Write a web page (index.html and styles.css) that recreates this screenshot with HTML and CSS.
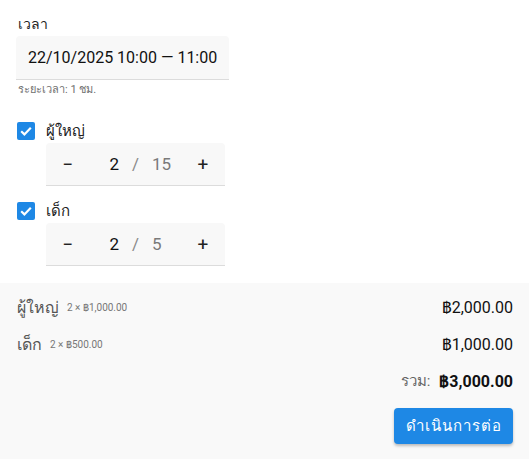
FILE: index.html
```html
<!DOCTYPE html>
<html lang="th">
<head>
<meta charset="utf-8">
<link rel="stylesheet" href="styles.css">
</head>
<body>
<div class="form">
  <div class="label">เวลา</div>
  <div class="field">22/10/2025 10:00 — 11:00</div>
  <div class="hint">ระยะเวลา: 1 ชม.</div>

  <div class="check-row">
    <span class="checkbox"><svg viewBox="0 0 18 18" width="18" height="18"><path d="M4.2 9.3l3.2 3.1 6.4-6.6" fill="none" stroke="#fff" stroke-width="2.2"/></svg></span>
    <span class="check-label">ผู้ใหญ่</span>
  </div>
  <div class="stepper">
    <span class="step-btn">−</span>
    <span class="value">2</span>
    <span class="slash">/</span>
    <span class="max">15</span>
    <span class="step-btn">+</span>
  </div>

  <div class="check-row">
    <span class="checkbox"><svg viewBox="0 0 18 18" width="18" height="18"><path d="M4.2 9.3l3.2 3.1 6.4-6.6" fill="none" stroke="#fff" stroke-width="2.2"/></svg></span>
    <span class="check-label">เด็ก</span>
  </div>
  <div class="stepper">
    <span class="step-btn">−</span>
    <span class="value">2</span>
    <span class="slash">/</span>
    <span class="max">5</span>
    <span class="step-btn">+</span>
  </div>
</div>

<div class="summary">
  <div class="line">
    <div class="item"><span class="item-name">ผู้ใหญ่</span><span class="item-detail">2 × ฿1,000.00</span></div>
    <div class="amount">฿2,000.00</div>
  </div>
  <div class="line">
    <div class="item"><span class="item-name">เด็ก</span><span class="item-detail">2 × ฿500.00</span></div>
    <div class="amount">฿1,000.00</div>
  </div>
  <div class="total">
    <span class="total-label">รวม:</span>
    <span class="total-amount">฿3,000.00</span>
  </div>
  <div class="actions">
    <button class="btn">ดำเนินการต่อ</button>
  </div>
</div>
</body>
</html>
```
FILE: styles.css
```css
* { box-sizing: border-box; }
html, body { margin: 0; padding: 0; background: #fff; }
body {
  font-family: Roboto, "Noto Sans", "Liberation Sans", sans-serif;
  color: #1a1a1a;
  width: 529px;
  height: 459px;
  overflow: hidden;
}
.form { padding: 14px 16px 0 16px; }
.label {
  font-size: 14px;
  line-height: 20px;
  font-weight: 500;
  padding-left: 2px;
  margin-bottom: 2px;
  color: #222;
}
.field {
  display: inline-block;
  height: 44px;
  line-height: 43px;
  padding: 0 12px;
  background: #f8f8f8;
  border-bottom: 1px solid #dcdcdc;
  border-radius: 4px 4px 0 0;
  font-size: 16px;
  color: #111;
}
.hint {
  margin-top: 2px;
  font-size: 11px;
  line-height: 16px;
  color: #707070;
  padding-left: 2px;
}
.check-row {
  display: flex;
  align-items: center;
  height: 24px;
  margin-top: 21px;
  padding-left: 1px;
}
.stepper + .check-row { margin-top: 13px; }
.checkbox {
  width: 18px;
  height: 18px;
  border-radius: 2px;
  background: #1e88e5;
  display: flex;
}
.check-label {
  margin-left: 11px;
  font-size: 15px;
  color: #222;
}
.stepper {
  margin-left: 30px;
  width: 179px;
  height: 43px;
  display: grid;
  grid-template-columns: 44px 1fr auto 1fr 44px;
  align-items: center;
  background: #f8f8f8;
  border-bottom: 1px solid #dcdcdc;
  border-radius: 4px 4px 0 0;
  font-size: 17px;
}
.step-btn {
  text-align: center;
  font-size: 19px;
  color: #222;
}
.value { justify-self: end; color: #111; }
.slash { padding: 0 13px; color: #8a8a8a; }
.max { justify-self: start; color: #7a7a7a; }
.summary {
  margin-top: 17px;
  background: #f9f9f9;
  padding: 12px 16px 0 17px;
  height: 176px;
}
.line {
  display: flex;
  justify-content: space-between;
  align-items: center;
  height: 24px;
  margin-bottom: 13px;
}
.item { display: flex; align-items: center; }
.item-name { font-size: 16px; color: #555; }
.item-detail { font-size: 10px; color: #777; margin-left: 8px; }
.amount { font-size: 16px; color: #111; }
.total {
  display: flex;
  justify-content: flex-end;
  align-items: center;
  height: 24px;
}
.total-label { font-size: 15px; color: #666; margin-right: 9px; }
.total-amount { font-size: 16px; font-weight: 700; color: #111; }
.actions {
  display: flex;
  justify-content: flex-end;
  margin-top: 15px;
}
.btn {
  width: 119px;
  height: 36px;
  border: none;
  border-radius: 4px;
  background: #1e88e5;
  color: #fff;
  font-family: inherit;
  font-size: 15px;
  font-weight: 500;
  letter-spacing: 1px;
  box-shadow: 0 2px 3px rgba(0,0,0,0.25);
  padding: 0;
}
```
